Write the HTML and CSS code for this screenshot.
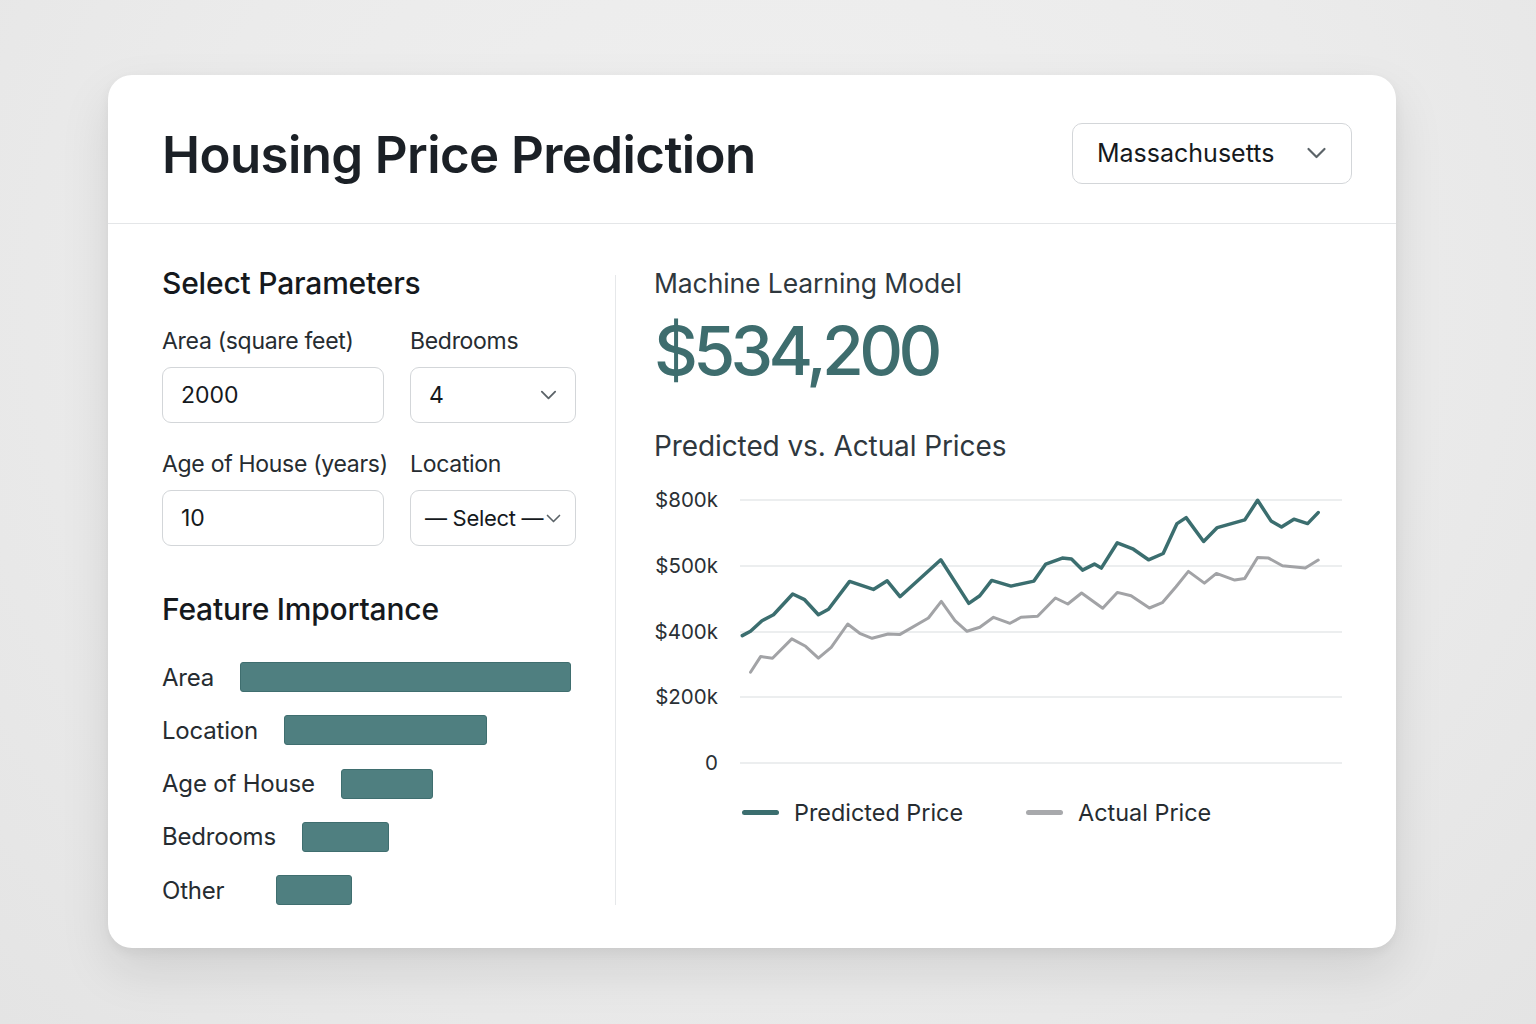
FILE: index.html
```html
<!DOCTYPE html>
<html lang="en">
<head>
<meta charset="utf-8">
<title>Housing Price Prediction</title>
<link rel="stylesheet" href="styles.css">
</head>
<body>
<div class="page">
  <div class="card">
    <header class="card-header">
      <h1 class="title">Housing Price Prediction</h1>
      <div class="state-select">
        <span>Massachusetts</span>
        <svg class="chev chev-lg" viewBox="0 0 20 12"><path d="M2 2 L10 10 L18 2" /></svg>
      </div>
    </header>
    <div class="card-body">
      <section class="left-col">
        <h2 class="section-title">Select Parameters</h2>
        <div class="form-grid">
          <div class="field">
            <label class="field-label">Area (square feet)</label>
            <div class="input">2000</div>
          </div>
          <div class="field">
            <label class="field-label">Bedrooms</label>
            <div class="input select"><span>4</span><svg class="chev" viewBox="0 0 20 12"><path d="M2 2 L10 10 L18 2" /></svg></div>
          </div>
          <div class="field">
            <label class="field-label">Age of House (years)</label>
            <div class="input">10</div>
          </div>
          <div class="field">
            <label class="field-label">Location</label>
            <div class="input select select-tight"><span>— Select —</span><svg class="chev chev-sm" viewBox="0 0 20 12"><path d="M2 2 L10 10 L18 2" /></svg></div>
          </div>
        </div>
        <h2 class="section-title fi-title">Feature Importance</h2>
        <div class="bars">
          <div class="bar-row"><span class="bar-label">Area</span><span class="bar" style="width:331px"></span></div>
          <div class="bar-row"><span class="bar-label">Location</span><span class="bar" style="width:203px"></span></div>
          <div class="bar-row"><span class="bar-label">Age of House</span><span class="bar" style="width:92px"></span></div>
          <div class="bar-row"><span class="bar-label">Bedrooms</span><span class="bar" style="width:87px"></span></div>
          <div class="bar-row"><span class="bar-label">Other</span><span class="bar bar-other" style="width:76px"></span></div>
        </div>
      </section>
      <div class="divider"></div>
      <section class="right-col">
        <h2 class="model-title">Machine Learning Model</h2>
        <div class="price">$534,200</div>
        <h2 class="model-title chart-title">Predicted vs. Actual Prices</h2>
        <div class="chart">
          <div class="y-axis">
            <span>$800k</span>
            <span>$500k</span>
            <span>$400k</span>
            <span>$200k</span>
            <span>0</span>
          </div>
          <svg class="plot" viewBox="0 0 602 280" width="602" height="280">
            <g class="grid">
              <line x1="0" y1="10" x2="602" y2="10" />
              <line x1="0" y1="76" x2="602" y2="76" />
              <line x1="0" y1="142" x2="602" y2="142" />
              <line x1="0" y1="207" x2="602" y2="207" />
              <line x1="0" y1="273" x2="602" y2="273" />
            </g>
            <polyline class="actual" points="10.5,182.2 20.6,166.6 32.5,168.2 51.8,148.9 65.6,156.3 78.4,168.2 91.2,157.3 107.7,134 119.7,143.3 132.1,148.3 148.1,144 159.6,144.6 188.4,128 201.3,111.4 215,130.7 227,141.3 239.8,137.3 253.5,127.3 270,133.3 281,127.3 297.6,126.3 315.4,108 327.8,114 341.6,103 362.7,118.3 377.3,102.4 391.1,105.7 409.4,118 422.3,112.7 436,96.7 448.4,81.4 464.4,93.1 476.4,83.4 494.7,90.1 504.8,88.4 517.6,67.5 528.6,68.1 542.4,75.8 565.3,78.1 578.2,70.1" />
            <polyline class="predicted" points="2.3,145.6 10.5,141.3 22,130.7 33.5,124.7 52.7,104 64.6,109.7 78.4,124.7 88.5,119.3 109.6,91.4 133.4,99.4 147.2,90.8 160,106.7 200.8,69.8 228.8,113.4 239.8,105.7 251.7,90.4 271,96.1 293.9,91.1 305.8,74.1 322.3,68.1 331.5,69.1 342.5,80.1 354.4,74.1 361.3,78.1 377.3,52.8 393.4,59.2 408.5,69.8 423.2,63.5 437,33.6 446.1,27.6 463.6,51.5 477.3,37.6 504.8,29.9 517.6,10.3 531,30.9 541.5,36.9 553.9,29.2 567.6,33.6 578.2,22.6" />
          </svg>
        </div>
        <div class="legend">
          <div class="legend-item"><span class="swatch swatch-pred"></span><span>Predicted Price</span></div>
          <div class="legend-item"><span class="swatch swatch-act"></span><span>Actual Price</span></div>
        </div>
      </section>
    </div>
  </div>
</div>
</body>
</html>
```

FILE: styles.css
```css
* { box-sizing: border-box; }

html, body {
  margin: 0;
  padding: 0;
}

body {
  width: 1536px;
  height: 1024px;
  overflow: hidden;
  background: radial-gradient(ellipse at 50% 30%, #f0f0f0 0%, #ebebeb 55%, #e4e4e4 100%);
  font-family: Inter, "Noto Sans", "Liberation Sans", sans-serif;
  color: #1d2227;
}

.page {
  padding: 75px 0 0 108px;
}

.card {
  width: 1288px;
  height: 873px;
  background: #ffffff;
  border-radius: 24px;
  box-shadow: 0 22px 50px rgba(0, 0, 0, 0.10), 0 4px 12px rgba(0, 0, 0, 0.05);
  overflow: hidden;
}

.card-header {
  height: 149px;
  padding: 10px 44px 0 54px;
  display: flex;
  align-items: center;
  justify-content: space-between;
  border-bottom: 1px solid #e4e6e8;
}

.title {
  margin: 0;
  font-size: 51px;
  font-weight: 600;
  letter-spacing: -0.6px;
  color: #1b2026;
}

.state-select {
  width: 280px;
  height: 61px;
  border: 1px solid #d3d6d9;
  border-radius: 10px;
  display: flex;
  align-items: center;
  justify-content: space-between;
  padding: 0 24px 0 24px;
  font-size: 25px;
  color: #15191d;
  margin-top: -2px;
}

.chev {
  width: 17px;
  height: 10px;
  fill: none;
  stroke: #5b6368;
  stroke-width: 2.2;
  stroke-linecap: round;
  stroke-linejoin: round;
}

.chev-lg {
  width: 21px;
  height: 12px;
}

.chev-sm {
  width: 15px;
  height: 9px;
}

.card-body {
  display: flex;
  padding: 42px 0 42px 0;
}

.left-col {
  width: 507px;
  padding-left: 54px;
}

.divider {
  width: 1px;
  height: 630px;
  margin-top: 9px;
  background: #e6e8ea;
}

.right-col {
  flex: 1;
  padding-left: 38px;
  padding-right: 54px;
}

.section-title {
  margin: 0;
  font-size: 30px;
  line-height: 34px;
  font-weight: 500;
  color: #15191d;
  letter-spacing: -0.2px;
}

.form-grid {
  display: grid;
  grid-template-columns: 222px 166px;
  column-gap: 26px;
  row-gap: 27px;
  margin-top: 27px;
}

.field-label {
  display: block;
  font-size: 23px;
  line-height: 28px;
  color: #262c31;
  margin-bottom: 12px;
  white-space: nowrap;
  letter-spacing: -0.3px;
}

.input {
  height: 56px;
  border: 1px solid #d3d6d9;
  border-radius: 9px;
  padding: 0 18px;
  display: flex;
  align-items: center;
  font-size: 23px;
  color: #15191d;
}

.select {
  justify-content: space-between;
  padding-right: 18px;
}

.select-tight {
  padding: 0 14px 0 14px;
  font-size: 22px;
  letter-spacing: -0.3px;
}

.fi-title {
  margin-top: 46px;
}

.bars {
  margin-top: 36px;
  display: flex;
  flex-direction: column;
  gap: 23.3px;
}

.bar-row {
  display: flex;
  align-items: center;
  gap: 26px;
  height: 30px;
}

.bar-label {
  font-size: 24px;
  color: #262c31;
  letter-spacing: -0.2px;
}

.bar {
  height: 30px;
  background: #4f7f80;
  border: 1px solid #3f6e6f;
  border-radius: 3px;
}

.bar-other {
  margin-left: 26px;
}

.model-title {
  margin: 0;
  font-size: 26.5px;
  line-height: 34px;
  font-weight: 400;
  color: #2f383e;
  letter-spacing: -0.1px;
}

.price {
  margin-top: 10px;
  font-size: 68px;
  line-height: 80px;
  font-weight: 500;
  color: #3e6d6e;
  letter-spacing: -4.7px;
}

.chart-title {
  margin-top: 39px;
  font-size: 28px;
}

.chart {
  margin-top: 27px;
  display: flex;
  height: 280px;
}

.y-axis {
  width: 64px;
  margin-right: 22px;
  display: flex;
  flex-direction: column;
  align-items: flex-end;
  gap: 45.75px;
  font-size: 20.5px;
  color: #2a3035;
}

.y-axis span {
  line-height: 20px;
  height: 20px;
}

.plot {
  display: block;
  overflow: visible;
}

.grid line {
  stroke: #e6e8ea;
  stroke-width: 1.5;
}

.predicted {
  fill: none;
  stroke: #3b6e6f;
  stroke-width: 3.5;
  stroke-linejoin: round;
  stroke-linecap: round;
}

.actual {
  fill: none;
  stroke: #a2a3a6;
  stroke-width: 3;
  stroke-linejoin: round;
  stroke-linecap: round;
}

.legend {
  margin-top: 27px;
  padding-left: 88px;
  display: flex;
  align-items: center;
  gap: 63px;
  height: 30px;
}

.legend-item {
  display: flex;
  align-items: center;
  gap: 15px;
  font-size: 23.4px;
  color: #262c31;
}

.swatch {
  width: 37px;
  height: 5px;
  border-radius: 3px;
}

.swatch-pred { background: #3b6e6f; }
.swatch-act { background: #a8a9ac; }
```
